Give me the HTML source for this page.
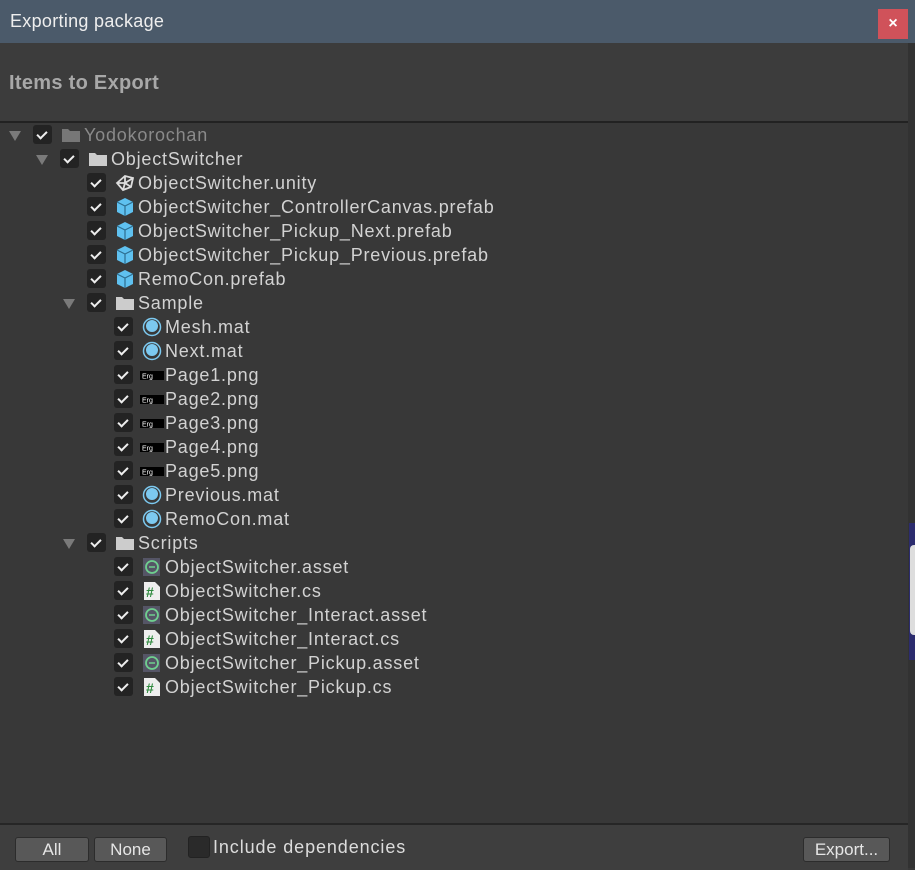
<!DOCTYPE html><html><head><meta charset="utf-8"><style>
body{margin:0;width:915px;height:868px;background:#383838;font-family:"Liberation Sans",sans-serif;overflow:hidden;position:relative}
.t{position:absolute;left:0;top:0;width:915px;height:43px;background:#4b5a6a;color:#eee;font-size:18px;line-height:43px}
.x{position:absolute;left:878px;top:9px;width:30px;height:30px;background:#d0525a;color:#fff;font-size:16px;text-align:center;line-height:29px;font-weight:bold}
.h{position:absolute;left:0;top:43px;width:908px;height:78px;background:#3c3c3c;border-bottom:2px solid #222}
.h span{position:absolute;left:9px;top:29px;color:#a8a8a8;font-size:20px;font-weight:bold;letter-spacing:0.3px}
.sb{position:absolute;left:908px;top:43px;width:7px;height:825px;background:#323232}
.r{position:absolute;height:24px;left:0;width:900px;font-size:18px;color:#d2d2d2;letter-spacing:0.8px}
.r .tr{position:absolute;top:8px;width:0;height:0;border-left:6px solid transparent;border-right:6px solid transparent;border-top:10px solid #7a7a7a}
.r .cb{position:absolute;top:2px;width:19px;height:19px;background:#232323;border-radius:3px}
.r .cb:after{content:"";position:absolute;width:8px;height:4px;border-left:2px solid #eee;border-bottom:2px solid #eee;transform:rotate(-45deg);top:6px;left:4px}
.r .ic{position:absolute;top:2px;width:20px;height:20px;letter-spacing:0}
.r .tx{position:absolute;top:1px;white-space:nowrap;line-height:22px}
.bot{position:absolute;left:0;top:823px;width:908px;height:45px;background:#3e3e3e;border-top:2px solid #262626}
.btn{position:absolute;top:12px;height:23px;background:#585858;border:1px solid #2c2c2c;border-radius:3px;color:#e6e6e6;font-size:17px;text-align:center;line-height:23px}
</style></head><body>
<div class="t"><span style="margin-left:10px;letter-spacing:0.3px">Exporting package</span><div class="x">×</div></div>
<div class="h"><span>Items to Export</span></div>
<div class="sb"></div>
<div style="position:absolute;left:909px;top:523px;width:6px;height:137px;background:#2c2c6e"></div>
<div style="position:absolute;left:910px;top:545px;width:5px;height:90px;background:#ddd;border-radius:4px 0 0 4px"></div>
<div id="tree"></div>
<div class="bot">
<div class="btn" style="left:15px;width:72px">All</div>
<div class="btn" style="left:94px;width:71px">None</div>
<div style="position:absolute;left:188px;top:11px;width:20px;height:20px;background:#2a2a2a;border:1px solid #222;border-radius:3px"></div>
<div style="position:absolute;left:213px;top:12px;color:#dcdcdc;font-size:18px;letter-spacing:0.9px">Include dependencies</div>
<div class="btn" style="left:803px;width:85px">Export...</div>
</div>
<script>
var F='<svg viewBox="0 0 20 20"><path d="M1 4h6l2 2h10v11H1z" fill="C"/></svg>';
var U='<svg viewBox="0 0 20 20"><path d="M2 10L10 3l8 2-2 9-8 3z M10 3v7l8-5 M10 10l-8 0 M10 10l-2 7 M10 10l6 4" stroke="#ddd" stroke-width="1.8" fill="none"/></svg>';
var P='<svg viewBox="0 0 20 20"><path d="M10 1l8 4v10l-8 4-8-4V5z" fill="#5fc1f0"/><path d="M2 5l8 4 8-4M10 9v10" stroke="#2d6d8f" stroke-width="1.2" fill="none"/></svg>';
var M='<svg viewBox="0 0 20 20"><circle cx="10" cy="10" r="8.5" fill="none" stroke="#7cc9f0" stroke-width="1.5"/><circle cx="10" cy="9" r="6" fill="#7cc9f0"/></svg>';
var G='<svg viewBox="0 0 24 20"><rect x="0" y="6" width="24" height="9" fill="#000"/><text x="2" y="13.5" font-size="7" fill="#fff" font-family="Liberation Sans">Erg</text></svg>';
var A='<svg viewBox="0 0 20 20"><rect x="1" y="1" width="17" height="18" fill="#556"/><circle cx="10" cy="10" r="6" fill="none" stroke="#6fcf8f" stroke-width="1.8"/><path d="M7 10h6" stroke="#6fcf8f" stroke-width="1.5"/></svg>';
var C='<svg viewBox="0 0 20 20"><path d="M2 1h11l5 5v13H2z" fill="#eee"/><text x="4" y="16" font-size="14" font-weight="bold" fill="#2f8a3f" font-family="Liberation Sans">#</text></svg>';
var rows=[[0,1,F.replace('C','#777'),'Yodokorochan'],[1,1,F.replace('C','#ccc'),'ObjectSwitcher'],[2,0,U,'ObjectSwitcher.unity'],[2,0,P,'ObjectSwitcher_ControllerCanvas.prefab'],[2,0,P,'ObjectSwitcher_Pickup_Next.prefab'],[2,0,P,'ObjectSwitcher_Pickup_Previous.prefab'],[2,0,P,'RemoCon.prefab'],[2,1,F.replace('C','#ccc'),'Sample'],[3,0,M,'Mesh.mat'],[3,0,M,'Next.mat'],[3,0,G,'Page1.png'],[3,0,G,'Page2.png'],[3,0,G,'Page3.png'],[3,0,G,'Page4.png'],[3,0,G,'Page5.png'],[3,0,M,'Previous.mat'],[3,0,M,'RemoCon.mat'],[2,1,F.replace('C','#ccc'),'Scripts'],[3,0,A,'ObjectSwitcher.asset'],[3,0,C,'ObjectSwitcher.cs'],[3,0,A,'ObjectSwitcher_Interact.asset'],[3,0,C,'ObjectSwitcher_Interact.cs'],[3,0,A,'ObjectSwitcher_Pickup.asset'],[3,0,C,'ObjectSwitcher_Pickup.cs']];
var h='';rows.forEach(function(r,i){var o=r[0]*27;var isG=r[2]==G;
h+='<div class="r" style="top:'+(123+24*i)+'px">'+(r[1]?'<div class="tr" style="left:'+(9+o)+'px"></div>':'')+'<div class="cb" style="left:'+(33+o)+'px"></div><div class="ic" style="left:'+(isG?(139+o-80):(61+o))+'px;'+(isG?'width:24px':'')+'">'+r[2]+'</div><div class="tx" style="left:'+(84+o)+'px;'+(i==0?'color:#8a8a8a':'')+'">'+r[3]+'</div></div>';});
document.getElementById('tree').innerHTML=h;
</script>
</body></html>
